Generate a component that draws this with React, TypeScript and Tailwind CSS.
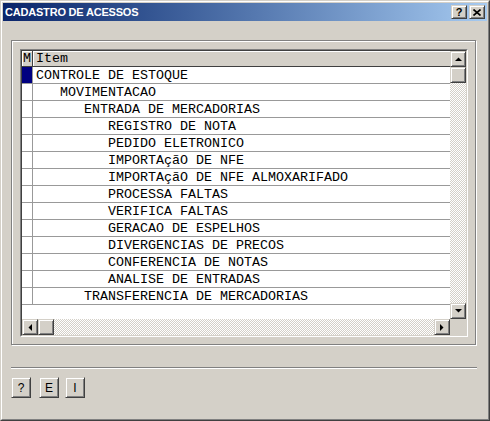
const rows: { level: number; text: string }[] = [
  { level: 0, text: "CONTROLE DE ESTOQUE" },
  { level: 1, text: "MOVIMENTACAO" },
  { level: 2, text: "ENTRADA DE MERCADORIAS" },
  { level: 3, text: "REGISTRO DE NOTA" },
  { level: 3, text: "PEDIDO ELETRONICO" },
  { level: 3, text: "IMPORTAçãO DE NFE" },
  { level: 3, text: "IMPORTAçãO DE NFE ALMOXARIFADO" },
  { level: 3, text: "PROCESSA FALTAS" },
  { level: 3, text: "VERIFICA FALTAS" },
  { level: 3, text: "GERACAO DE ESPELHOS" },
  { level: 3, text: "DIVERGENCIAS DE PRECOS" },
  { level: 3, text: "CONFERENCIA DE NOTAS" },
  { level: 3, text: "ANALISE DE ENTRADAS" },
  { level: 2, text: "TRANSFERENCIA DE MERCADORIAS" },
];

const indent = ["pl-[3px]", "pl-[27px]", "pl-[51px]", "pl-[75px]"];

const raised =
  "bg-[#d4d0c8] border border-t-[#d4d0c8] border-l-[#d4d0c8] border-r-[#404040] border-b-[#404040] shadow-[inset_1px_1px_#fff,inset_-1px_-1px_#808080]";

const dither =
  "bg-[image:repeating-conic-gradient(#ffffff_0%_25%,#d4d0c8_0%_50%)] bg-[length:2px_2px]";

function Arrow({ dir }: { dir: "up" | "down" | "left" | "right" }) {
  const pts = {
    up: "0,4 7,4 3.5,0.5",
    down: "0,0 7,0 3.5,3.5",
    left: "4,0 4,7 0.5,3.5",
    right: "0,0 0,7 3.5,3.5",
  }[dir];
  const vertical = dir === "up" || dir === "down";
  return (
    <svg width={vertical ? 7 : 4} height={vertical ? 4 : 7} viewBox={vertical ? "0 0 7 4" : "0 0 4 7"}>
      <polygon points={pts} fill="#000" />
    </svg>
  );
}

function ScrollBtn({ dir }: { dir: "up" | "down" | "left" | "right" }) {
  return (
    <div className={`w-4 h-4 shrink-0 flex items-center justify-center ${raised}`}>
      <Arrow dir={dir} />
    </div>
  );
}

function DlgButton({ label }: { label: string }) {
  return (
    <button
      className={`w-[20px] h-[21px] flex items-center justify-center text-[12px] text-black font-['Liberation_Sans',Arial,sans-serif] ${raised}`}
    >
      {label}
    </button>
  );
}

export default function App() {
  return (
    <div className="w-[490px] h-[421px] bg-[#d4d0c8] border border-t-[#d4d0c8] border-l-[#d4d0c8] border-r-[#404040] border-b-[#404040]">
      <div className="h-full border border-t-white border-l-white border-r-[#808080] border-b-[#808080] p-px flex flex-col">
        {/* title bar */}
        <div className="h-[18px] shrink-0 flex items-center justify-between bg-gradient-to-r from-[#0a246a] to-[#a6caf0] pl-[2px] pr-[2px]">
          <span className="text-white font-bold text-[11px] tracking-[-0.2px] font-['Liberation_Sans',Arial,sans-serif]">
            CADASTRO DE ACESSOS
          </span>
          <div className="flex gap-[2px]">
            <div className={`w-4 h-[14px] flex items-center justify-center text-[11px] font-bold leading-none font-['Liberation_Sans',Arial,sans-serif] ${raised}`}>
              ?
            </div>
            <div className={`w-4 h-[14px] flex items-center justify-center ${raised}`}>
              <svg width="8" height="7" viewBox="0 0 8 7">
                <path d="M0.5 0.5 L7.5 6.5 M7.5 0.5 L0.5 6.5" stroke="#000" strokeWidth="1.6" />
              </svg>
            </div>
          </div>
        </div>

        {/* group box */}
        <div className="mt-[19px] ml-[8px] w-[465px] h-[305px] border border-[#808080] shadow-[inset_1px_1px_#fff,1px_1px_#fff] pt-[8px] pl-[8px]">
          {/* grid */}
          <div className="w-[448px] h-[288px] border border-t-[#808080] border-l-[#808080] border-r-white border-b-white">
            <div className="w-full h-full border border-t-[#404040] border-l-[#404040] border-r-[#d4d0c8] border-b-[#d4d0c8] grid grid-cols-[1fr_16px] grid-rows-[1fr_16px] font-['Liberation_Mono','Courier_New',monospace] text-[13.33px] text-black">
              <div className="bg-white overflow-hidden">
                <div className="flex h-[16px] bg-[#d4d0c8] border-b border-[#404040]">
                  <div className="w-[11px] border-r border-[#404040] shadow-[inset_1px_1px_#fff] flex items-center justify-center leading-none pt-px overflow-hidden">
                    M
                  </div>
                  <div className="flex-1 shadow-[inset_1px_1px_#fff] flex items-center pl-[3px] leading-none pt-px">
                    Item
                  </div>
                </div>
                {rows.map((r, i) => (
                  <div key={i} className="flex h-[17px] border-b border-[#999]">
                    <div className={`w-[11px] border-r border-[#999] ${i === 0 ? "bg-[#000080]" : ""}`} />
                    <div className={`flex-1 flex items-center whitespace-pre leading-none pt-[2px] ${indent[r.level]}`}>
                      {r.text}
                    </div>
                  </div>
                ))}
              </div>

              {/* vertical scrollbar */}
              <div className={`flex flex-col ${dither}`}>
                <ScrollBtn dir="up" />
                <div className={`w-4 h-4 ${raised}`} />
                <div className="flex-1" />
                <ScrollBtn dir="down" />
              </div>

              {/* horizontal scrollbar */}
              <div className={`flex ${dither}`}>
                <ScrollBtn dir="left" />
                <div className={`w-4 h-4 ${raised}`} />
                <div className="flex-1" />
                <ScrollBtn dir="right" />
              </div>

              <div className="bg-[#d4d0c8]" />
            </div>
          </div>
        </div>

        {/* separator */}
        <div className="mt-[22px] ml-[8px] w-[466px] border-t border-[#808080] border-b border-b-white" />

        {/* buttons */}
        <div className="mt-[8px] ml-[8px] flex">
          <DlgButton label="?" />
          <div className="ml-[8px]">
            <DlgButton label="E" />
          </div>
          <div className="ml-[6px]">
            <DlgButton label="I" />
          </div>
        </div>
      </div>
    </div>
  );
}
